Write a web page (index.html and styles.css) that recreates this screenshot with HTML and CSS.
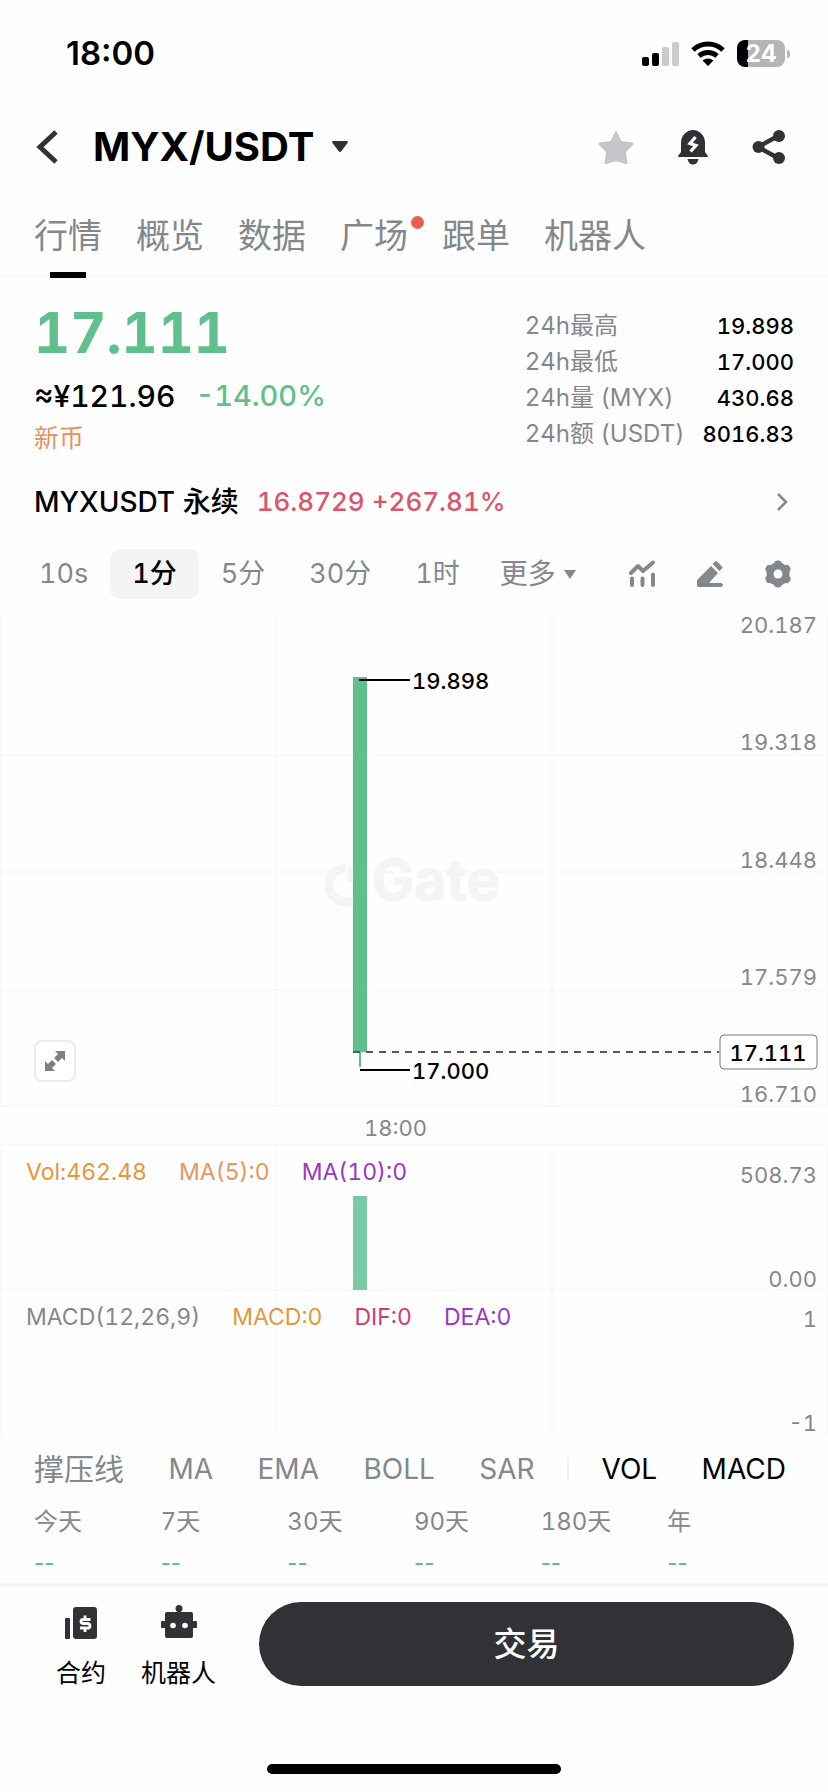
FILE: index.html
```html
<!DOCTYPE html>
<html lang="zh-CN">
<head>
  <meta charset="UTF-8">
  <meta name="viewport" content="width=device-width, initial-scale=1.0">
  <title>MYX/USDT</title>
  <link rel="stylesheet" href="styles.css">
</head>
<body>
  <div class="status-bar">
    <span class="status-time">18:00</span>
    <div class="status-icons">
      <svg width="37" height="25" viewBox="0 0 37 25">
        <rect x="0" y="16" width="7" height="9" rx="2"/>
        <rect x="10" y="12" width="7" height="13" rx="2"/>
        <rect x="20" y="6" width="7" height="19" rx="2" fill="#cbcbcb"/>
        <rect x="30" y="1" width="7" height="24" rx="2" fill="#cbcbcb"/>
      </svg>
      <svg width="34" height="26" viewBox="0 0 34 26">
        <path d="M2 10A22 22 0 0 1 32 10" fill="none" stroke="#000" stroke-width="5"/>
        <path d="M8 16A13.500 13.500 0 0 1 26 16" fill="none" stroke="#000" stroke-width="5"/>
        <path d="M17 26L11.500 20.500Q17 16.500 22.500 20.500Z"/>
      </svg>
      <div class="battery"><span>24</span></div>
    </div>
  </div>

  <header class="header">
    <button class="icon-btn" aria-label="返回">
      <svg width="24" height="34" viewBox="0 0 24 34"><path d="M20 2L4 17L20 32" fill="none" stroke="#303236" stroke-width="5"/></svg>
    </button>
    <button class="pair">
      <span class="pair-name">MYX/USDT</span>
      <svg width="16" height="12" viewBox="0 0 16 12"><path d="M1 0H15Q16.500 1 15.500 2L9.500 10Q8 12 6.500 10L.5 2Q-.5 1 1 0Z" fill="#303236"/></svg>
    </button>
    <div class="header-actions">
      <button class="icon-btn" aria-label="收藏">
        <svg width="36" height="36" viewBox="0 0 36 36"><path d="M17 3Q18 1 19 3L23.500 12L34.500 13.500Q36.500 14.500 35 16L28 23L29.500 33.500Q29.500 36 27 35Q18 30 9 35Q6.500 36 6.500 33.500L8 23L1 16Q-.5 14.500 1.500 13.500L12.500 12Z" fill="#c4c6c9"/></svg>
      </button>
      <button class="icon-btn" aria-label="提醒">
        <svg width="30" height="36" viewBox="0 0 30 36">
          <path d="M3 23V14A12 13 0 0 1 27 14V23L30 27Q30 28 29 28H1Q0 28 0 27Z" fill="#303236"/>
          <path d="M9.500 30H20.500Q19.500 35.500 15 35.500T9.500 30Z" fill="#303236"/>
          <path d="M17.500 8L12 14.500L18 16.500L12.500 22.500" fill="none" stroke="#fff" stroke-width="3.200"/>
        </svg>
      </button>
      <button class="icon-btn" aria-label="分享">
        <svg width="34" height="36" viewBox="0 0 34 36">
          <path d="M27 6.500L6 18L27 29.500" fill="none" stroke="#303236" stroke-width="4.500"/>
          <circle cx="6.500" cy="18" r="6" fill="#303236"/><circle cx="27" cy="7" r="6" fill="#303236"/><circle cx="27" cy="29" r="6" fill="#303236"/>
        </svg>
      </button>
    </div>
  </header>

  <nav class="tabs">
    <a href="#" class="tab active">行情</a>
    <a href="#" class="tab">概览</a>
    <a href="#" class="tab">数据</a>
    <a href="#" class="tab has-dot">广场</a>
    <a href="#" class="tab">跟单</a>
    <a href="#" class="tab">机器人</a>
  </nav>

  <main>
    <section class="ticker">
      <div class="ticker-main">
        <div class="price">17.111</div>
        <div class="price-sub"><span>≈¥121.96</span><span class="change up">-14.00%</span></div>
        <div class="tag-new">新币</div>
      </div>
      <dl class="stats">
        <dt>24h最高</dt><dd>19.898</dd>
        <dt>24h最低</dt><dd>17.000</dd>
        <dt>24h量 (MYX)</dt><dd>430.68</dd>
        <dt>24h额 (USDT)</dt><dd>8016.83</dd>
      </dl>
    </section>

    <a href="#" class="perp">
      <span>MYXUSDT 永续</span>
      <span class="perp-price down">16.8729 +267.81%</span>
      <svg class="perp-arrow" width="12" height="18" viewBox="0 0 12 18"><path d="M2 1L10 9L2 17" fill="none" stroke="#84888c" stroke-width="2.500"/></svg>
    </a>

    <div class="periods">
      <button class="period">10s</button>
      <button class="period active">1分</button>
      <button class="period">5分</button>
      <button class="period">30分</button>
      <button class="period">1时</button>
      <button class="period more">更多
        <svg width="12" height="9" viewBox="0 0 12 9"><path d="M0 0H12L6 9Z" fill="#84888c"/></svg>
      </button>
      <div class="tools">
        <button class="icon-btn" aria-label="指标">
          <svg width="28" height="28" viewBox="0 0 28 28" fill="none" stroke="#84888c" stroke-width="4" stroke-linecap="round">
            <path d="M3 13L10 6L15 11L25 2.500" stroke-linejoin="round"/>
            <path d="M4 18.500V25M14.500 18.500V25M25 14.500V25"/>
          </svg>
        </button>
        <button class="icon-btn" aria-label="画线">
          <svg width="28" height="28" viewBox="0 0 28 28" fill="#84888c">
            <path d="M19 1.500Q20 .5 21 1.500L26 6.500Q27 7.500 26 8.500L23.500 11L16.500 4Z"/>
            <path d="M15 6L22 13L13 23H25Q27 23.500 27 25T25 27H2Q1 27 1 25V21Q1 20 2 19Z"/>
          </svg>
        </button>
        <button class="icon-btn" aria-label="设置">
          <svg width="28" height="28" viewBox="0 0 28 28">
            <circle cx="14" cy="14" r="11.500" fill="#84888c"/>
            <path d="M14 4.500V23.500M5.500 9L22.500 19M5.500 19L22.500 9" stroke="#84888c" stroke-width="8" stroke-linecap="round"/>
            <circle cx="14" cy="14" r="4.500" fill="#fff"/>
          </svg>
        </button>
      </div>
    </div>

    <section class="chart">
      <svg class="plot" viewBox="0 0 828 530">
        <g class="grid-lines">
          <path d="M1 0V490M276 0V490M552 0V490M827 0V490"/>
          <path d="M0 139H828M0 256H828M0 374H828M0 490H828M0 529H828"/>
        </g>
        <g class="watermark">
          <path d="M346 252A17 17 0 1 0 363 269" fill="none" stroke-width="9"/>
          <rect x="349" y="252" width="14" height="13"/>
          <text x="372" y="284">Gate</text>
        </g>
        <rect class="candle" x="353" y="61" width="14" height="375"/>
        <path class="wick" d="M360 436V451"/>
        <path class="marker" d="M359 64H410M360 454H410"/>
        <path class="last-line" d="M353 436H719"/>
        <rect class="last-box" x="720" y="419" width="97" height="34" rx="4"/>
        <g class="marker-text">
          <text x="412" y="73">19.898</text>
          <text x="412" y="463">17.000</text>
        </g>
        <g class="axis">
          <text x="817" y="17">20.187</text>
          <text x="817" y="134">19.318</text>
          <text x="817" y="252">18.448</text>
          <text x="817" y="369">17.579</text>
          <text x="817" y="486">16.710</text>
          <text x="427" y="520">18:00</text>
        </g>
        <text class="last-text" x="768" y="445">17.111</text>
      </svg>
      <button class="expand" aria-label="全屏">
        <svg width="20" height="20" viewBox="0 0 20 20">
          <path d="M10 0H20V10L17 7L13 11L9 7L13 3ZM0 10L3 13L7 9L11 13L7 17L10 20H0Z" fill="#7d8185"/>
        </svg>
      </button>
    </section>

    <section class="chart">
      <div class="legend">
        <span class="c-vol">Vol:462.48</span>
        <span class="c-ma5">MA(5):0</span>
        <span class="c-ma10">MA(10):0</span>
      </div>
      <svg class="plot" viewBox="0 0 828 145">
        <path class="grid-lines" d="M1 0V145M276 0V145M552 0V145M827 0V145M0 144H828"/>
        <rect class="volume" x="353" y="50" width="14" height="94"/>
        <g class="axis">
          <text x="817" y="37">508.73</text>
          <text x="817" y="141">0.00</text>
        </g>
      </svg>
    </section>

    <section class="chart">
      <div class="legend">
        <span>MACD(12,26,9)</span>
        <span class="c-vol">MACD:0</span>
        <span class="c-dif">DIF:0</span>
        <span class="c-ma10">DEA:0</span>
      </div>
      <svg class="plot" viewBox="0 0 828 145">
        <path class="grid-lines" d="M1 0V145M276 0V145M552 0V145M827 0V145"/>
        <g class="axis">
          <text x="817" y="36">1</text>
          <text x="817" y="140">-1</text>
        </g>
      </svg>
    </section>

    <div class="indicators">
      <button class="cjk">撑压线</button>
      <button>MA</button>
      <button>EMA</button>
      <button>BOLL</button>
      <button>SAR</button>
      <span class="divider"></span>
      <button class="on">VOL</button>
      <button class="on">MACD</button>
    </div>

    <table class="returns">
      <thead>
        <tr><th>今天</th><th>7天</th><th>30天</th><th>90天</th><th>180天</th><th>年</th></tr>
      </thead>
      <tbody>
        <tr><td>--</td><td>--</td><td>--</td><td>--</td><td>--</td><td>--</td></tr>
      </tbody>
    </table>
  </main>

  <footer class="bottom-bar">
    <a href="#" class="bottom-link">
      <svg width="34" height="36" viewBox="0 0 34 36">
        <rect x="1" y="13" width="5" height="21" rx="1" fill="#303236"/>
        <rect x="9" y="2" width="24" height="32" rx="3" fill="#303236"/>
        <path d="M26.500 14.500H19.500Q17 14.500 17 16.500T19.500 18.500H23Q26 18.500 26 21T23 23H16M21 10.500V14.500M21 23V27" fill="none" stroke="#fff" stroke-width="2.800"/>
      </svg>
      <span>合约</span>
    </a>
    <a href="#" class="bottom-link">
      <svg width="36" height="36" viewBox="0 0 36 36" fill="#303236">
        <circle cx="18" cy="3.500" r="3.500"/><rect x="16.500" y="3" width="3" height="6"/>
        <rect x="4" y="7" width="28" height="26" rx="2"/>
        <rect x="0" y="16" width="36" height="7" rx="1"/>
        <circle cx="12" cy="20.500" r="2.800" fill="#fff"/><circle cx="24" cy="20.500" r="2.800" fill="#fff"/>
      </svg>
      <span>机器人</span>
    </a>
    <button class="trade-btn">交易</button>
  </footer>
  <div class="home-indicator"></div>
</body>
</html>
```

FILE: styles.css
```css
* {
  margin: 0;
  padding: 0;
  box-sizing: border-box;
}

body {
  font-family: Inter, "Noto Sans CJK SC", sans-serif;
  font-variant-numeric: tabular-nums;
  font-size: 24px;
  line-height: 36px;
  background: #fefefe;
  color: #000;
}

a {
  color: inherit;
  text-decoration: none;
}

button {
  font: inherit;
  font-variant-numeric: inherit;
  color: inherit;
  background: none;
  border: none;
  cursor: pointer;
}

svg {
  display: block;
}

/* status bar */
.status-bar {
  display: flex;
  justify-content: space-between;
  align-items: center;
  height: 106px;
  padding: 0 38px 0 66px;
}

.status-time {
  font-size: 33px;
  font-weight: 600;
  font-variant-numeric: normal;
}

.status-icons {
  display: flex;
  align-items: center;
  gap: 12px;
}

.battery {
  position: relative;
  width: 48px;
  height: 27px;
  margin-right: 5px;
  border-radius: 8px;
  background: linear-gradient(to right, #000 11px, #b5b5b5 11px);
  color: #fff;
  font-size: 24px;
  font-weight: 700;
  line-height: 27px;
  text-align: center;
}

.battery::after {
  content: "";
  position: absolute;
  right: -5px;
  top: 10px;
  width: 3px;
  height: 8px;
  border-radius: 0 3px 3px 0;
  background: #b5b5b5;
}

/* header */
.header {
  display: flex;
  align-items: center;
  height: 82px;
  padding: 0 42px 0 36px;
}

.pair {
  display: flex;
  align-items: center;
  gap: 18px;
  margin-left: 33px;
}

.pair-name {
  font-size: 40px;
  font-weight: 700;
}

.header-actions {
  display: flex;
  gap: 44px;
  margin-left: auto;
}

/* tabs */
.tabs {
  display: flex;
  gap: 34px;
  height: 89px;
  padding: 0 34px;
  border-bottom: 3px solid #f6f7f8;
  font-size: 34px;
  line-height: 96px;
  color: #84888c;
}

.tab {
  position: relative;
}

.tab.active::after {
  content: "";
  position: absolute;
  left: 50%;
  top: 84px;
  width: 36px;
  height: 6px;
  margin-left: -18px;
  background: #000;
}

.tab.has-dot::after {
  content: "";
  position: absolute;
  right: -16px;
  top: 28px;
  width: 13px;
  height: 13px;
  border-radius: 50%;
  background: #e8604f;
}

/* ticker */
.ticker {
  display: flex;
  justify-content: space-between;
  padding: 31px 34px 0;
}

.price {
  font-size: 56px;
  font-weight: 700;
  line-height: 50px;
  color: #5fc08d;
}

.price-sub {
  display: flex;
  gap: 20px;
  margin-top: 20px;
  font-size: 30px;
  font-weight: 500;
}

.change {
  font-size: 29px;
}

.up {
  color: #5fc08d;
}

.down {
  color: #d9566a;
}

.tag-new {
  height: 36px;
  margin-top: 6px;
  font-size: 25px;
  color: #e8925a;
}

.stats {
  display: grid;
  grid-template-columns: auto auto;
  grid-auto-rows: 36px;
  align-content: start;
  column-gap: 18px;
  color: #84888c;
}

.stats dd {
  color: #000;
  font-size: 22px;
  font-weight: 500;
  text-align: right;
}

.perp {
  display: flex;
  align-items: center;
  gap: 18px;
  height: 76px;
  padding: 0 40px 0 34px;
  margin-top: 8px;
  font-size: 28px;
  font-weight: 500;
}

.perp-price {
  font-size: 26px;
}

.perp-arrow {
  margin-left: auto;
}

/* periods */
.periods {
  display: flex;
  align-items: center;
  height: 68px;
  padding: 0 36px 0 17px;
  margin-bottom: 8px;
  font-size: 27px;
  color: #84888c;
}

.period {
  height: 50px;
  padding: 0 22px;
  border-radius: 10px;
}

.period.active {
  background: #f4f4f4;
  color: #000;
  font-weight: 500;
}

.period.more {
  display: flex;
  align-items: center;
  gap: 8px;
  padding: 0 0 0 18px;
  font-size: 28px;
}

.tools {
  display: flex;
  gap: 40px;
  margin-left: auto;
}

/* charts */
.chart {
  position: relative;
}

.plot {
  width: 100%;
  height: auto;
  overflow: visible;
  font-size: 22px;
}

.grid-lines {
  fill: none;
  stroke: #f8f9f9;
  stroke-width: 2;
}

.watermark {
  fill: #f4f4f4;
  stroke: #f4f4f4;
  font-size: 56px;
  font-weight: 700;
}

.candle {
  fill: #5fc08d;
}

.wick {
  stroke: #5fc08d;
  stroke-width: 2;
}

.volume {
  fill: #79cba6;
}

.marker {
  fill: none;
  stroke: #000;
  stroke-width: 2;
}

.marker-text,
.last-text {
  font-weight: 500;
}

.last-line {
  stroke: #55585c;
  stroke-width: 2;
  stroke-dasharray: 7 6;
}

.last-box {
  fill: #fff;
  stroke: #77797c;
}

.last-text {
  text-anchor: middle;
}

.axis {
  fill: #84888c;
  text-anchor: end;
}

.expand {
  position: absolute;
  left: 34px;
  top: 424px;
  width: 42px;
  height: 42px;
  padding: 9px;
  border: 2px solid #ececee;
  border-radius: 8px;
  background: #fff;
}

.legend {
  position: absolute;
  left: 26px;
  top: 8px;
  display: flex;
  gap: 32px;
  font-size: 23px;
  color: #84888c;
}

.c-vol {
  color: #e3983c;
}

.c-ma5 {
  color: #e8955f;
}

.c-ma10 {
  color: #9838c8;
}

.c-dif {
  color: #d03a78;
}

/* indicators */
.indicators {
  display: flex;
  justify-content: space-between;
  align-items: center;
  height: 65px;
  padding: 0 42px 0 34px;
  font-size: 28px;
  color: #84888c;
}

.indicators .cjk {
  font-size: 30px;
}

.indicators .on {
  color: #000;
}

.divider {
  width: 2px;
  height: 24px;
  margin: 0 -12px;
  background: #f0f1f2;
}

.returns {
  width: calc(100% - 68px);
  margin: 0 34px;
  table-layout: fixed;
  border-collapse: collapse;
  color: #84888c;
}

.returns th,
.returns td {
  height: 41px;
  font-weight: 400;
  text-align: left;
}

.returns td {
  font-variant-numeric: normal;
  font-size: 22px;
  font-weight: 500;
  color: #5fc08d;
}

/* bottom bar */
.bottom-bar {
  display: flex;
  align-items: flex-start;
  padding: 15px 34px 0 56px;
  border-top: 4px solid #f6f7f8;
}

.bottom-link {
  display: flex;
  flex-direction: column;
  align-items: center;
  gap: 14px;
  margin-right: 35px;
  padding-top: 3px;
  font-size: 25px;
}

.trade-btn {
  flex: 1;
  height: 84px;
  margin-left: 8px;
  border-radius: 42px;
  background: #303236;
  color: #fff;
  font-size: 33px;
  font-weight: 500;
}

.home-indicator {
  width: 294px;
  height: 10px;
  margin: 73px auto 16px;
  border-radius: 5px;
  background: #000;
}
```
